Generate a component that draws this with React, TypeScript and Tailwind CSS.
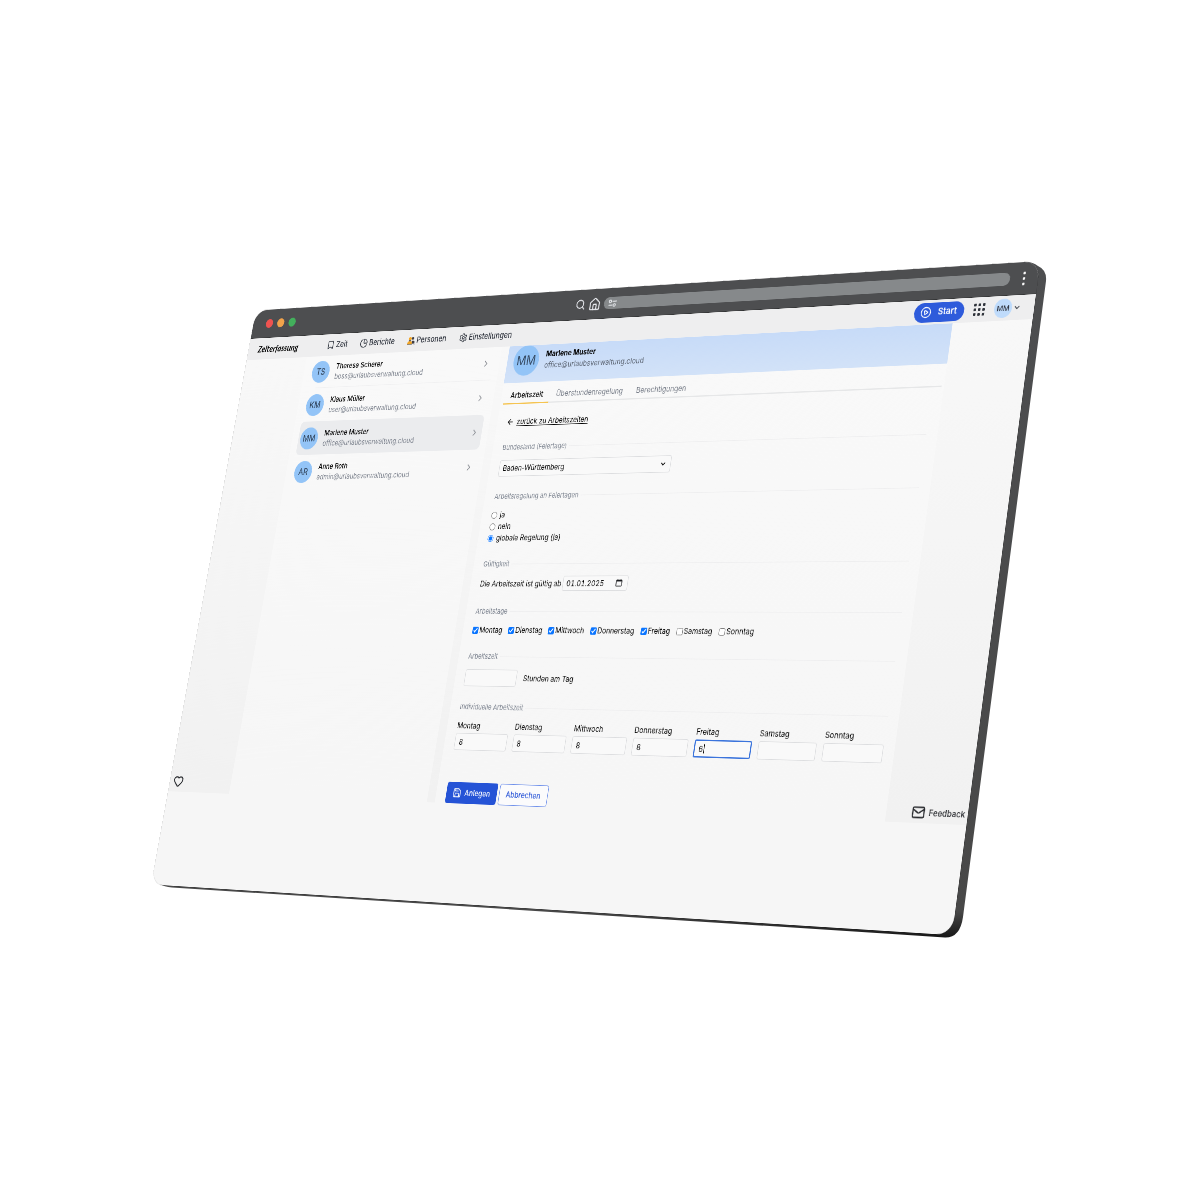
import React from "react";
import {
  ArrowLeft, Bookmark, ChevronDown, ChevronRight, Heart, House, Mail, PieChart, PlayCircle, Save, Search, Settings,
} from "lucide-react";

type Point = [number, number];

const WIDTH = 1440;
const HEIGHT = 940;
const CORNERS: [Point, Point, Point, Point] = [
  [255.9, 310.6],
  [1040.3, 261.2],
  [952.3, 935.4],
  [151.4, 884.5],
];

/** CSS matrix that projects a w x h rectangle onto four corners (clockwise from top left). */
function project(w: number, h: number, corners: [Point, Point, Point, Point]): string {
  const [[x0, y0], [x1, y1], [x2, y2], [x3, y3]] = corners;
  const dx1 = x1 - x2, dx2 = x3 - x2, sx = x0 - x1 + x2 - x3;
  const dy1 = y1 - y2, dy2 = y3 - y2, sy = y0 - y1 + y2 - y3;
  const det = dx1 * dy2 - dx2 * dy1;
  const g = (sx * dy2 - dx2 * sy) / det;
  const k = (dx1 * sy - sx * dy1) / det;
  const a = x1 - x0 + g * x1, b = x3 - x0 + k * x3;
  const d = y1 - y0 + g * y1, e = y3 - y0 + k * y3;
  const m = [a / w, d / w, 0, g / w, b / h, e / h, 0, k / h, 0, 0, 1, 0, x0, y0, 0, 1];
  return `matrix3d(${m.map((n) => n.toFixed(8)).join(",")})`;
}

const people = [
  { initials: "TS", name: "Theresa Scherer", mail: "boss@urlaubsverwaltung.cloud" },
  { initials: "KM", name: "Klaus Müller", mail: "user@urlaubsverwaltung.cloud" },
  { initials: "MM", name: "Marlene Muster", mail: "office@urlaubsverwaltung.cloud", active: true },
  { initials: "AR", name: "Anne Roth", mail: "admin@urlaubsverwaltung.cloud" },
];

const days = [
  { name: "Montag", on: true, hours: "8" },
  { name: "Dienstag", on: true, hours: "8" },
  { name: "Mittwoch", on: true, hours: "8" },
  { name: "Donnerstag", on: true, hours: "8" },
  { name: "Freitag", on: true, hours: "6" },
  { name: "Samstag", on: false, hours: "" },
  { name: "Sonntag", on: false, hours: "" },
];

function PeopleIcon() {
  return (
    <svg className="size-4" viewBox="0 0 16 16" aria-hidden="true">
      <circle cx="10.8" cy="4.4" r="2.4" fill="#3f3f46" />
      <path d="M9.500 8.500h2.700a2.800 2.800 0 0 1 2.800 2.800V13H9.500z" fill="#3f3f46" />
      <circle cx="5.4" cy="4.800" r="2.700" fill="#f5a623" />
      <path d="M1 14v-1.800a3.200 3.200 0 0 1 3.200-3.200h2.400a3.200 3.200 0 0 1 3.200 3.200V14z" fill="#f5a623" />
      <path d="M1 14h9.500M3.200 7.300q2.200 2 4.400 0M14 14h1.500" fill="none" stroke="#3f3f46" strokeWidth="1.200" />
    </svg>
  );
}

function CalendarIcon() {
  return (
    <svg className="absolute top-[5px] right-2.5 size-3" viewBox="0 0 12 12" fill="none" stroke="#1b1c1f" aria-hidden="true">
      <rect x="1" y="2" width="10" height="9" rx="1" strokeWidth="1.2" />
      <path d="M1 3h10" strokeWidth="2" />
      <path d="M3.200 .5v2M8.800 .5v2" strokeWidth="1.2" />
    </svg>
  );
}

function TuneIcon() {
  return (
    <svg className="h-3 w-4" viewBox="0 0 16 12" fill="none" stroke="#e5e7eb" strokeWidth="1.6" aria-hidden="true">
      <circle cx="3.5" cy="3" r="2" />
      <path d="M7.5 3H15M1 9h7.5" />
      <circle cx="11.5" cy="9" r="2" />
    </svg>
  );
}

function GridIcon() {
  return (
    <svg className="size-5" viewBox="0 0 20 20" fill="#2f333b" aria-hidden="true">
      {[3, 10, 17].map((y) => [3, 10, 17].map((x) => <rect key={`${x}-${y}`} x={x - 2} y={y - 2} width="4" height="4" rx="1" />))}
    </svg>
  );
}

function TitleBar() {
  return (
    <div className="flex h-12 shrink-0 items-center border-b border-[#333435] bg-[#4d4e50] pr-5 pl-[27px]">
      <div className="flex w-[620px] gap-[9px]">
        <span className="size-[15px] rounded-full bg-[#ef5350]" />
        <span className="size-[15px] rounded-full bg-[#f2a34b]" />
        <span className="size-[15px] rounded-full bg-[#43b05c]" />
      </div>
      <Search className="size-[19px] text-gray-200" strokeWidth={2.2} />
      <House className="ml-1.5 size-[22px] text-gray-200" strokeWidth={2.2} />
      <div className="ml-1.5 flex h-[19px] grow items-center rounded-full bg-[#86898b] pl-2">
        <TuneIcon />
      </div>
      <div className="ml-5 flex flex-col gap-1">
        <span className="size-1 rounded-full bg-white" />
        <span className="size-1 rounded-full bg-white" />
        <span className="size-1 rounded-full bg-white" />
      </div>
    </div>
  );
}

function AppHeader() {
  const link = "flex items-center gap-[3px]";
  return (
    <header className="relative z-10 flex h-9 shrink-0 items-center bg-[#eeeeef] pr-[21px] pl-5 text-[13px] text-[#2e333d]">
      <a href="#" className="w-[145px] font-['Lato'] text-[15px] font-bold text-black italic">Zeiterfassung</a>
      <nav className="flex gap-[25px] font-medium">
        <a href="#" className={link}><Bookmark className="size-4" />Zeit</a>
        <a href="#" className={link}><PieChart className="size-4" />Berichte</a>
        <a href="#" className={link}><PeopleIcon />Personen</a>
        <a href="#" className={link}><Settings className="size-4" />Einstellungen</a>
      </nav>
      <button className="ml-auto flex h-[29px] items-center gap-2.5 rounded-full bg-[#2e5bdb] pr-3 pl-2.5 font-semibold text-white">
        <PlayCircle className="size-[18px]" strokeWidth={2} />Start
      </button>
      <button className="ml-[14px]" aria-label="Anwendungen"><GridIcon /></button>
      <button className="ml-[14px] flex items-center gap-0.5 text-[11px] font-medium" aria-label="Benutzermenü">
        <span className="flex size-7 items-center justify-center rounded-full bg-[#bfdbfb]">MM</span>
        <ChevronDown className="size-3" strokeWidth={2.5} />
      </button>
    </header>
  );
}

function PeopleList() {
  return (
    <aside className="-mt-0.5 w-[392px] bg-linear-to-b from-[#f9f9f9] to-[#f6f6f6] pr-3 pl-[13px]">
      {people.map((p, i) => (
        <a
          key={p.mail}
          href="#"
          className={p.active
            ? "flex h-[55px] items-center rounded-lg bg-[#ebecee] pr-1.5 pl-1"
            : i === 0
              ? "relative flex h-[55px] items-center pr-1.5 pl-1 after:absolute after:right-0 after:bottom-0 after:left-4 after:h-px after:bg-[#f0f0f1]"
              : "flex h-[55px] items-center pr-1.5 pl-1"}
        >
          <span className="flex size-9 items-center justify-center rounded-full bg-[#93c4f7] text-[14px] font-medium text-[#33475f]">{p.initials}</span>
          <span className="ml-3 grow text-[12px] leading-[17px]">
            <span className="block font-medium text-black">{p.name}</span>
            <span className="block text-[#7d838e]">{p.mail}</span>
          </span>
          <ChevronRight className="size-4 text-[#85888f]" />
        </a>
      ))}
    </aside>
  );
}

function Section({ title, className, children }: { title: string; className: string; children: React.ReactNode }) {
  return (
    <fieldset className={className}>
      <legend className="flex w-full items-center gap-1 text-[11px] leading-4 text-[#7d8490] after:h-px after:grow after:bg-[#eeeeef]">{title}</legend>
      {children}
    </fieldset>
  );
}

const field = "h-[26px] rounded-[3px] border border-[#dcdddf] bg-[#f9f9f9] px-[7px] text-[12px]";

function Details() {
  return (
    <main className="flex w-[779px] flex-col bg-linear-to-b from-[#f9f9f9] to-[#f6f6f6] text-[12px] text-black">
      <div className="flex h-[59px] items-center bg-linear-to-b from-[#c7dbf8] to-[#d2e2f8] pb-3 pl-3">
        <span className="flex size-12 shrink-0 items-center justify-center rounded-full bg-[#93c4f7] text-[20px] text-[#33475f]">MM</span>
        <div className="ml-3 leading-[18px]">
          <p className="font-bold text-black">Marlene Muster</p>
          <p className="text-[#5d6674]">office@urlaubsverwaltung.cloud</p>
        </div>
      </div>
      <nav className="mr-1 ml-[5px] flex h-9 items-end border-b-2 border-[#e6e7e8] text-[#777d88]">
        <a href="#" className="-mb-0.5 border-b-2 border-[#f5c451] px-3 pb-[3px] font-medium text-black">Arbeitszeit</a>
        <a href="#" className="px-3 pb-[3px]">Überstundenregelung</a>
        <a href="#" className="px-3 pb-[3px]">Berechtigungen</a>
      </nav>
      <form className="mr-[18px] ml-[18px]" onSubmit={(e) => e.preventDefault()}>
        <a href="#" className="mt-[19px] flex items-center gap-[5px] leading-[18px]">
          <ArrowLeft className="size-[14px]" /><span className="underline underline-offset-2">zurück zu Arbeitszeiten</span>
        </a>
        <Section title="Bundesland (Feiertage)" className="mt-[23px]">
          <div className="relative mt-3 w-[316px]">
            <select aria-label="Bundesland (Feiertage)" className="block h-[26px] w-full appearance-none rounded-[3px] border border-[#dcdddf] bg-[#f9f9f9] px-[6px] text-[12px]">
              <option>Baden-Württemberg</option>
            </select>
            <ChevronDown className="pointer-events-none absolute top-[7px] right-2 size-3" strokeWidth={3} />
          </div>
        </Section>
        <Section title="Arbeitsregelung an Feiertagen" className="mt-[23px]">
          <div className="mt-3 flex flex-col leading-[18px]">
            {["ja", "nein", "globale Regelung (ja)"].map((t, i) => (
              <label key={t} className="flex items-center gap-[5px]">
                <input type="radio" name="feiertage" defaultChecked={i === 2} className="size-[11px] accent-[#0a75ff]" />{t}
              </label>
            ))}
          </div>
        </Section>
        <Section title="Gültigkeit" className="mt-[23px]">
          <label className="mt-[11px] flex items-center gap-0.5">
            Die Arbeitszeit ist gültig ab
            <span className="relative">
              <input defaultValue="01.01.2025" className="block h-[23px] w-[118px] rounded-[3px] border border-[#dcdddf] bg-[#f9f9f9] px-[6px] text-[12px] tabular-nums" />
              <CalendarIcon />
            </span>
          </label>
        </Section>
        <Section title="Arbeitstage" className="mt-[23px]">
          <div className="mt-3 flex gap-[11px] leading-[18px]">
            {days.map((d) => (
              <label key={d.name} className="flex items-center gap-0.5">
                <input type="checkbox" defaultChecked={d.on} className="size-[11px] accent-[#0a75ff]" />{d.name}
              </label>
            ))}
          </div>
        </Section>
        <Section title="Arbeitszeit" className="mt-[23px]">
          <label className="mt-3 flex items-center gap-3">
            <input className={`${field} w-[97px]`} />Stunden am Tag
          </label>
        </Section>
        <Section title="Individuelle Arbeitszeit" className="mt-[23px]">
          <div className="mt-3 grid grid-cols-7 gap-[11px] pl-px">
            {days.map((d) => (
              <label key={d.name} className="block leading-[18px]">
                {d.name}
                <span className="relative mt-0.5 block">
                  <input
                    defaultValue={d.hours}
                    className={d.name === "Freitag"
                      ? "block h-[26px] w-full rounded-[3px] border-2 border-[#3b74dc] bg-[#f9f9f9] px-[6px] text-[12px] outline-none"
                      : `${field} block w-full`}
                  />
                  {d.name === "Freitag" && <span className="absolute top-[6px] left-[17px] h-[14px] w-px bg-black" />}
                </span>
              </label>
            ))}
          </div>
        </Section>
        <div className="mt-12 flex gap-1 pl-px font-medium">
          <button className="flex h-8 items-center gap-1.5 rounded bg-[#2553d6] px-3 text-white"><Save className="size-4" />Anlegen</button>
          <button className="h-8 rounded border border-[#6f90ea] bg-[#fbfbfc] px-3 text-[#2f5ad8]">Abbrechen</button>
        </div>
      </form>
    </main>
  );
}

export default function App() {
  return (
    <div className="relative min-h-screen overflow-hidden bg-white font-['Inter',sans-serif]">
      <svg className="absolute top-0 left-0 h-[1200px] w-[1200px]" viewBox="0 0 1200 1200" aria-hidden="true">
        <defs>
          <linearGradient id="edge" x1="0" y1="262" x2="0" y2="938" gradientUnits="userSpaceOnUse">
            <stop offset="0" stopColor="#4d4e50" />
            <stop offset=".96" stopColor="#484848" />
            <stop offset="1" stopColor="#161616" />
          </linearGradient>
        </defs>
        <path d="M1026 262 Q1033 262 1038 266 Q1047 270 1046 281 L963 917 Q960 938 945 937.600 L900 934.500 L172 887.500 Q164 886.500 160 884 L600 600 Z" fill="url(#edge)" />
      </svg>
      <div
        className="absolute top-0 left-0 flex h-[940px] w-[1440px] origin-top-left flex-col overflow-hidden rounded-3xl bg-[#f6f6f6] shadow-[0_0_0_1px_rgba(0,0,0,0.12)] outline-1 outline-transparent will-change-transform"
        style={{ transform: project(WIDTH, HEIGHT, CORNERS) }}
      >
        <TitleBar />
        <AppHeader />
        <div className="relative flex h-[708px] shrink-0 bg-linear-to-b from-[#f8f8f8] to-[#f1f1f1] pl-[127px]">
          <PeopleList />
          <div className="w-[15px]" />
          <Details />
          <button className="absolute bottom-1.5 left-[7px]" aria-label="Gefällt mir"><Heart className="size-[21px] text-[#26282c]" strokeWidth={2.2} /></button>
          <button className="absolute right-1 bottom-1 flex items-center gap-1.5 text-[12px] font-medium text-[#26282c]">
            <Mail className="size-[21px]" strokeWidth={2.2} />Feedback
          </button>
        </div>
      </div>
    </div>
  );
}
